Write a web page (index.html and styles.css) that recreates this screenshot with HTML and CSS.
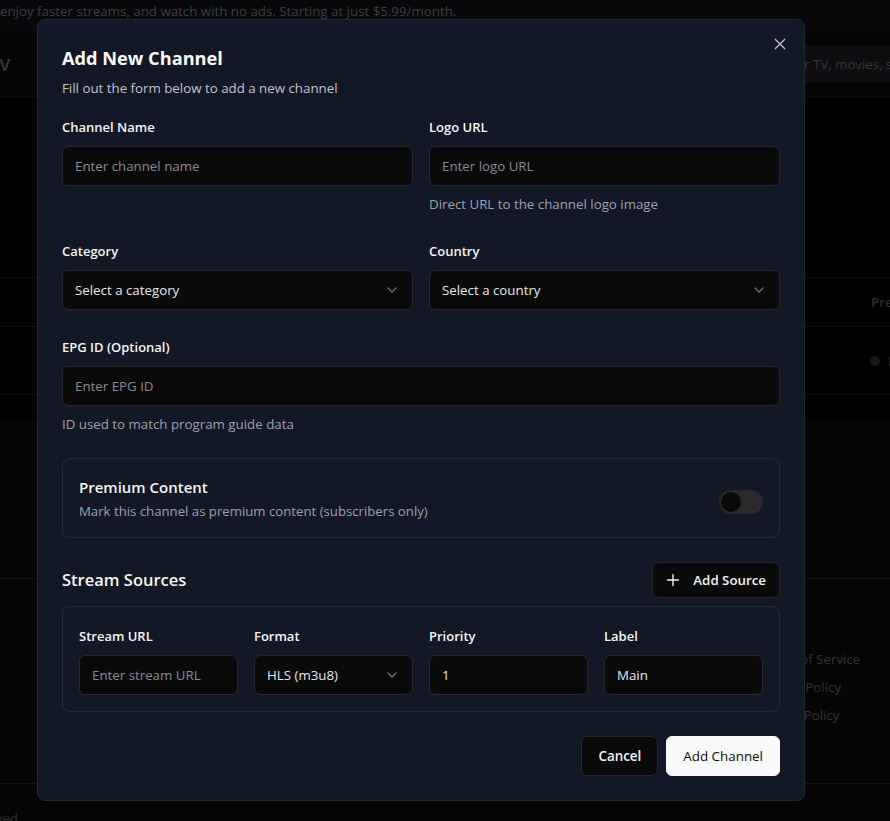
FILE: index.html
```html
<!DOCTYPE html>
<html lang="en">
<head>
<meta charset="utf-8">
<title>Add New Channel</title>
<link rel="stylesheet" href="styles.css">
</head>
<body>
<div class="page">
  <div class="banner">enjoy faster streams, and watch with no ads. Starting at just $5.99/month.</div>
  <header class="nav">
    <span class="logo">TV</span>
    <div class="search">Search for TV, movies, sports and more</div>
  </header>
  <main class="main">
    <div class="trow thead"><span class="th">Premium</span></div>
    <div class="trow tbody"><span class="dot"></span><span class="td">Free</span></div>
  </main>
  <section class="after"></section>
  <footer class="footer">
    <div class="links">
      <span>Terms of Service</span>
      <span>Privacy Policy</span>
      <span>Cookie Policy</span>
    </div>
  </footer>
  <div class="bottom"><div class="copy-wrap"><span class="copy">© 2024 StreamTV. All rights reserved</span></div></div>
</div>

<div class="modal" role="dialog">
  <button class="close" aria-label="Close">
    <svg width="16" height="16" viewBox="0 0 16 16" fill="none" stroke="currentColor" stroke-width="1.4" stroke-linecap="round"><path d="M3.2 3.2l9.6 9.6M12.8 3.2l-9.6 9.6"/></svg>
  </button>
  <div class="head">
    <h2 class="title">Add New Channel</h2>
    <p class="subtitle">Fill out the form below to add a new channel</p>
  </div>

  <div class="form">
    <div class="grid2">
      <div class="field">
        <label class="label">Channel Name</label>
        <input class="input" placeholder="Enter channel name">
      </div>
      <div class="field">
        <label class="label">Logo URL</label>
        <input class="input" placeholder="Enter logo URL">
        <p class="help">Direct URL to the channel logo image</p>
      </div>
    </div>

    <div class="grid2">
      <div class="field">
        <label class="label">Category</label>
        <button class="select"><span>Select a category</span>
          <svg width="16" height="16" viewBox="0 0 16 16" fill="none" stroke="currentColor" stroke-width="1.3" stroke-linecap="round" stroke-linejoin="round"><path d="M4 6l4 4 4-4"/></svg>
        </button>
      </div>
      <div class="field">
        <label class="label">Country</label>
        <button class="select"><span>Select a country</span>
          <svg width="16" height="16" viewBox="0 0 16 16" fill="none" stroke="currentColor" stroke-width="1.3" stroke-linecap="round" stroke-linejoin="round"><path d="M4 6l4 4 4-4"/></svg>
        </button>
      </div>
    </div>

    <div class="field">
      <label class="label">EPG ID (Optional)</label>
      <input class="input" placeholder="Enter EPG ID">
      <p class="help">ID used to match program guide data</p>
    </div>

    <div class="premium">
      <div class="premium-text">
        <div class="premium-title">Premium Content</div>
        <div class="premium-desc">Mark this channel as premium content (subscribers only)</div>
      </div>
      <span class="switch"><span class="thumb"></span></span>
    </div>

    <div class="sources">
      <div class="sources-head">
        <h3 class="sources-title">Stream Sources</h3>
        <button class="btn btn-dark add-source">
          <svg width="16" height="16" viewBox="0 0 16 16" fill="none" stroke="currentColor" stroke-width="1.4" stroke-linecap="round"><path d="M8 2.6v10.8M2.6 8h10.8"/></svg>
          <span>Add Source</span>
        </button>
      </div>
      <div class="source-box">
        <div class="field">
          <label class="label">Stream URL</label>
          <input class="input" placeholder="Enter stream URL">
        </div>
        <div class="field">
          <label class="label">Format</label>
          <button class="select"><span>HLS (m3u8)</span>
            <svg width="16" height="16" viewBox="0 0 16 16" fill="none" stroke="currentColor" stroke-width="1.3" stroke-linecap="round" stroke-linejoin="round"><path d="M4 6l4 4 4-4"/></svg>
          </button>
        </div>
        <div class="field">
          <label class="label">Priority</label>
          <input class="input" value="1">
        </div>
        <div class="field">
          <label class="label">Label</label>
          <input class="input" value="Main">
        </div>
      </div>
    </div>
  </div>

  <div class="actions">
    <button class="btn btn-dark btn-lg">Cancel</button>
    <button class="btn btn-light btn-lg">Add Channel</button>
  </div>
</div>
</body>
</html>
```

FILE: styles.css
```css
* { box-sizing: border-box; }

html, body {
  margin: 0;
  padding: 0;
  background: #000;
  overflow: hidden;
  font-family: "Open Sans", "Noto Sans", sans-serif;
}

.page {
  width: 890px;
  height: 821px;
  overflow: hidden;
}

/* ---------- background page ---------- */
.banner {
  height: 32px;
  background: #08080a;
  color: #3b3e45;
  font-size: 13.3px;
  line-height: 22px;
  white-space: nowrap;
}

.nav {
  height: 65px;
  background: #050506;
  border-bottom: 1px solid #0b0b0d;
  display: flex;
  align-items: center;
  justify-content: space-between;
}

.logo {
  margin-left: -10px;
  color: #3a3b40;
  font-size: 17px;
  font-weight: 600;
}

.search {
  width: 420px;
  margin-right: -264px;
  height: 38px;
  background: #0e0e10;
  border-radius: 6px;
  color: #34363b;
  font-size: 13.3px;
  line-height: 38px;
  padding-left: 12px;
  white-space: nowrap;
  overflow: hidden;
}

.main {
  padding-top: 180px;
  padding-bottom: 24px;
  background: #000;
}

.trow {
  display: flex;
  align-items: center;
  border-top: 1px solid #121215;
}

.thead { height: 49px; }

.tbody {
  height: 69px;
  border-bottom: 1px solid #121215;
}

.th {
  margin-left: 871px;
  color: #2d2e33;
  font-size: 13.3px;
  font-weight: 600;
  white-space: nowrap;
}

.dot {
  margin-left: 870px;
  width: 10px;
  height: 10px;
  border-radius: 50%;
  background: #18181c;
  flex: none;
}

.td {
  margin-left: 8px;
  color: #2d2e33;
  font-size: 13.3px;
  white-space: nowrap;
}

.after {
  height: 159px;
  background: #040405;
}

.footer {
  height: 205px;
  background: #050506;
  border-top: 1px solid #141417;
  padding-top: 66px;
}

.links {
  margin-left: 758px;
  display: flex;
  flex-direction: column;
  color: #303238;
  font-size: 13.3px;
  line-height: 28px;
  white-space: nowrap;
}

.bottom {
  height: 40px;
  background: #050506;
  border-top: 1px solid #141417;
  padding-top: 24px;
}

.copy-wrap {
  width: 18px;
  display: flex;
  justify-content: flex-end;
}

.copy {
  color: #303238;
  font-size: 13.3px;
  line-height: 20px;
  white-space: nowrap;
  flex: none;
}

/* ---------- modal ---------- */
.modal {
  position: absolute;
  left: 37px;
  top: 19px;
  width: 768px;
  background: #121826;
  border: 1px solid #222a38;
  border-radius: 8px;
  padding: 24px;
  color: #f4f4f5;
}

.close {
  position: absolute;
  top: 16px;
  right: 16px;
  width: 16px;
  height: 16px;
  padding: 0;
  border: 0;
  background: transparent;
  color: #b9bdc5;
  display: flex;
}

.head { display: flex; flex-direction: column; }

.title {
  margin: 0;
  font-size: 18.2px;
  line-height: 28px;
  font-weight: 700;
  color: #fafafa;
}

.subtitle {
  margin: 6px 0 0;
  font-size: 13.3px;
  line-height: 20px;
  color: #c0c4cc;
}

.form {
  margin-top: 16px;
  display: flex;
  flex-direction: column;
  gap: 24px;
}

.grid2 {
  display: grid;
  grid-template-columns: 1fr 1fr;
  gap: 16px;
}

.field {
  display: flex;
  flex-direction: column;
  min-width: 0;
}

.label {
  padding-top: 3px;
  margin-bottom: 9px;
  font-size: 13px;
  line-height: 20px;
  font-weight: 600;
  color: #f4f4f5;
}

.input, .select {
  height: 40px;
  width: 100%;
  background: #0a0a0b;
  border: 1px solid #26282d;
  border-radius: 6px;
  padding: 0 12px;
  font-family: inherit;
  font-size: 13.3px;
  color: #e6e7ea;
  outline: none;
}

.input::placeholder { color: #878a92; }

.select {
  display: flex;
  align-items: center;
  justify-content: space-between;
  text-align: left;
}

.select svg { color: #6e7178; flex: none; }

.help {
  margin: 8px 0 0;
  font-size: 13.3px;
  line-height: 20px;
  color: #9ca1ab;
}

/* premium */
.premium {
  height: 80px;
  border: 1px solid #262c37;
  border-radius: 8px;
  padding: 16px;
  display: flex;
  align-items: center;
  justify-content: space-between;
}

.premium-title {
  font-size: 15px;
  line-height: 24px;
  font-weight: 600;
  color: #f4f4f5;
}

.premium-desc {
  margin-top: 2px;
  font-size: 13.2px;
  line-height: 20px;
  color: #9ca1ab;
}

.switch {
  margin-top: 8px;
  width: 44px;
  height: 24px;
  border-radius: 12px;
  background: #2a2a2d;
  padding: 2px;
  display: flex;
}

.thumb {
  width: 20px;
  height: 20px;
  border-radius: 50%;
  background: #0a0a0b;
}

/* sources */
.sources-head {
  display: flex;
  align-items: center;
  justify-content: space-between;
}

.sources-title {
  margin: 0;
  font-size: 16.5px;
  line-height: 24px;
  font-weight: 600;
  color: #f4f4f5;
}

.btn {
  font-family: inherit;
  border-radius: 6px;
  display: flex;
  align-items: center;
  cursor: pointer;
}

.btn-dark {
  background: #0a0a0b;
  border: 1px solid #26282d;
  color: #f4f4f5;
  font-weight: 600;
}

.btn-light {
  background: #fafafa;
  border: 1px solid #fafafa;
  color: #0a0a0b;
  font-weight: 500;
}

.add-source {
  height: 36px;
  padding: 0 13px 0 12px;
  gap: 12px;
  font-size: 13.3px;
}

.add-source svg { flex: none; }

.source-box {
  margin-top: 8px;
  border: 1px solid #262c37;
  border-radius: 8px;
  padding: 16px;
  display: grid;
  grid-template-columns: repeat(4, 1fr);
  gap: 16px;
}

.actions {
  margin-top: 24px;
  display: flex;
  justify-content: flex-end;
  gap: 8px;
}

.btn-lg {
  height: 40px;
  padding: 0 16px;
  font-size: 13.4px;
}
```
